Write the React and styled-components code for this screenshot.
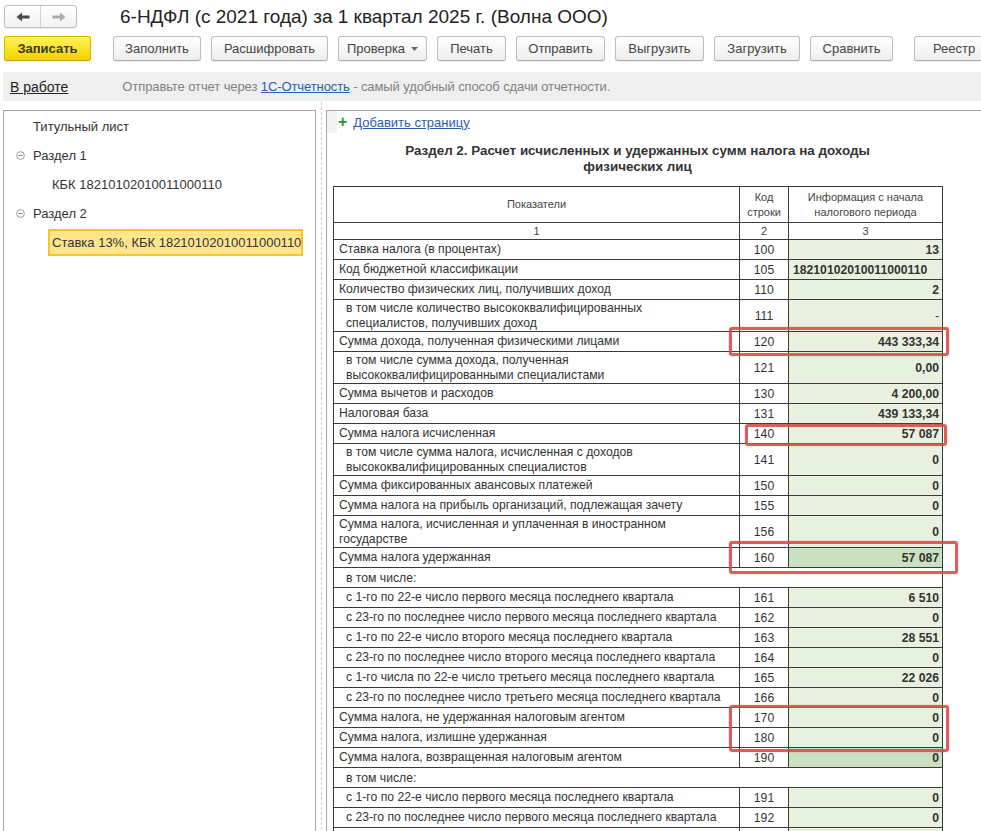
import React from 'react';
import styled, { createGlobalStyle } from 'styled-components';

const GlobalStyle = createGlobalStyle`
  html, body {
    margin: 0;
    padding: 0;
    overflow: hidden;
    background: #fff;
    font-family: 'Liberation Sans', Arial, sans-serif;
    color: #333;
  }
`;

const Page = styled.div`
  width: 981px;
  height: 831px;
  overflow: hidden;
`;

const TopBar = styled.div`
  display: flex;
  align-items: center;
  height: 27px;
  padding: 3px 0 0 4px;
`;

const NavGroup = styled.div`
  display: flex;
  height: 21px;
  border: 1px solid #bdbdbd;
  border-radius: 3px;
  background: linear-gradient(#ffffff, #f1f1f1);
  box-shadow: 0 1px 1px rgba(0, 0, 0, 0.08);
`;

const NavButton = styled.div`
  width: 35px;
  display: flex;
  align-items: center;
  justify-content: center;
  border-left: ${(p) => (p.$divider ? '1px solid #d4d4d4' : 'none')};
`;

const Title = styled.h1`
  margin: 0 0 0 43px;
  font-size: 19px;
  font-weight: normal;
  color: #222;
  white-space: nowrap;
`;

const Toolbar = styled.div`
  display: flex;
  align-items: center;
  gap: 10px;
  margin-top: 6px;
  padding-left: 4px;
  white-space: nowrap;
`;

const Button = styled.div`
  box-sizing: border-box;
  width: ${(p) => p.$w}px;
  flex-shrink: 0;
  height: 25px;
  display: flex;
  align-items: center;
  justify-content: center;
  gap: 6px;
  border: 1px solid #bcbcbc;
  border-bottom-color: #a9a9a9;
  border-radius: 3px;
  background: linear-gradient(#ffffff, #ededed);
  box-shadow: 0 1px 1px rgba(0, 0, 0, 0.07);
  font-size: 13px;
  color: #444;
  margin-left: ${(p) => p.$gapBefore || 0}px;
`;

const PrimaryButton = styled(Button)`
  background: linear-gradient(#fff25a, #f2d200);
  border-color: #d6b600;
  border-bottom-color: #c1a200;
  font-weight: bold;
  color: #3d3a1c;
  margin-right: 12px;
`;

const InfoBar = styled.div`
  display: flex;
  align-items: center;
  height: 29px;
  margin: 11px 0 0 3px;
  padding-left: 7px;
  background: #efefef;
  white-space: nowrap;
`;

const StatusLink = styled.span`
  font-size: 14px;
  color: #222;
  text-decoration: underline;
  margin-right: 54px;
`;

const Hint = styled.span`
  font-size: 13px;
  letter-spacing: -0.1px;
  color: #808080;
`;

const HintLink = styled.span`
  color: #2a5db0;
  text-decoration: underline;
`;

const Main = styled.div`
  display: flex;
  margin-top: 9px;
  padding-left: 3px;
  height: 730px;
`;

const TreePanel = styled.div`
  width: 311px;
  flex-shrink: 0;
  border: 1px solid #a6a6a6;
  border-bottom: none;
  padding-top: 1px;
`;

const Splitter = styled.div`
  width: 10px;
  flex-shrink: 0;
  display: flex;
  justify-content: center;
  margin-top: -8px;

  &::after {
    content: '';
    width: 0;
    border-left: 1px dashed #cfcfcf;
  }
`;

const TreeItem = styled.div`
  display: flex;
  align-items: center;
  height: 29px;
  padding-left: ${(p) => p.$indent}px;
  font-size: 13px;
  color: #333;
  white-space: nowrap;
`;

const Toggle = styled.svg`
  width: 9px;
  height: 9px;
  margin-right: 8px;
`;

const Selected = styled.div`
  display: flex;
  align-items: center;
  width: 249px;
  height: 23px;
  padding-left: 2px;
  margin-left: -4px;
  border: 2px solid #f6c623;
  background: #fde58e;
`;

const FormPanel = styled.div`
  flex: 1;
  border-top: 1px solid #a6a6a6;
  border-left: 1px solid #a6a6a6;
`;

const AddRow = styled.div`
  display: flex;
  align-items: center;
  height: 22px;
  font-size: 13px;
`;

const Gutter = styled.div`
  width: 10px;
  height: 22px;
  background: #f3f3f3;
  margin-right: 1px;
`;

const Plus = styled.span`
  color: #1f9a1f;
  font-weight: bold;
  font-size: 16px;
  line-height: 1;
  margin-right: 6px;
`;

const AddLink = styled.span`
  color: #2a5db0;
  text-decoration: underline;
`;

const Sheet = styled.div`
  width: 609px;
  margin-left: 6px;
`;

const SheetTitle = styled.div`
  margin: 10px 0 11px;
  text-align: center;
  font-weight: bold;
  font-size: 13.4px;
  line-height: 16px;
  color: #333;
`;

const TableWrap = styled.div`
  position: relative;
`;

const Table = styled.table`
  width: 609px;
  border-collapse: collapse;
  table-layout: fixed;
  font-size: 12.2px;
  color: #333;
`;

const Th = styled.td`
  border: 1px solid #3a3a3a;
  padding: 0;
  text-align: center;
  font-size: 11px;
  line-height: 15px;
  color: #444;
  height: ${(p) => p.$h}px;
`;

const Label = styled.td`
  border: 1px solid #3a3a3a;
  padding: 0 0 0 ${(p) => (p.$indent ? 12 : 5)}px;
  line-height: 15px;
  height: ${(p) => (p.$tall ? 31 : 19)}px;
  white-space: nowrap;
  overflow: hidden;
`;

const SubLabel = styled.td`
  border: 1px solid #3a3a3a;
  padding-left: 12px;
  height: 19px;
  padding-top: 0;
  padding-bottom: 0;
`;

const Code = styled.td`
  border: 1px solid #3a3a3a;
  padding: 0;
  text-align: center;
`;

const Value = styled.td`
  border: 1px solid #3a3a3a;
  padding: 0 ${(p) => (p.$left ? 0 : 3)}px 0 ${(p) => (p.$left ? 4 : 0)}px;
  text-align: ${(p) => (p.$left ? 'left' : 'right')};
  background: ${(p) => (p.$dark ? '#c9e0c1' : '#e8f1df')};
  font-weight: ${(p) => (p.$plain ? 'normal' : 'bold')};
  white-space: nowrap;
`;

const Mark = styled.div`
  position: absolute;
  border: 3px solid rgba(215, 72, 66, 0.88);
  border-radius: 3px;
  box-shadow: 0 0 2px rgba(215, 72, 66, 0.35);
  pointer-events: none;
`;

const ArrowLeft = ({ color }) => (
  <svg width="14" height="10" viewBox="0 0 14 10">
    <path d="M0.5 5 L6 0.5 V3.6 H13.5 V6.4 H6 V9.5 Z" fill={color} />
  </svg>
);

const ArrowRight = ({ color }) => (
  <svg width="14" height="10" viewBox="0 0 14 10">
    <path d="M13.5 5 L8 0.5 V3.6 H0.5 V6.4 H8 V9.5 Z" fill={color} />
  </svg>
);

const Caret = () => (
  <svg width="7" height="4" viewBox="0 0 7 4">
    <path d="M0 0 H7 L3.5 4 Z" fill="#666" />
  </svg>
);

const Collapse = () => (
  <Toggle viewBox="0 0 9 9">
    <circle cx="4.5" cy="4.5" r="3.9" fill="#fff" stroke="#9a9a9a" strokeWidth="1" />
    <line x1="2.4" y1="4.5" x2="6.6" y2="4.5" stroke="#7a7a7a" strokeWidth="1" />
  </Toggle>
);

const rows = [
  { label: 'Ставка налога (в процентах)', code: '100', value: '13' },
  { label: 'Код бюджетной классификации', code: '105', value: '18210102010011000110', left: true },
  { label: 'Количество физических лиц, получивших доход', code: '110', value: '2' },
  {
    label: ['в том числе количество высококвалифицированных', 'специалистов, получивших доход'],
    code: '111',
    value: '-',
    indent: true,
    plain: true,
  },
  { label: 'Сумма дохода, полученная физическими лицами', code: '120', value: '443 333,34' },
  {
    label: ['в том числе сумма дохода, полученная', 'высококвалифицированными специалистами'],
    code: '121',
    value: '0,00',
    indent: true,
  },
  { label: 'Сумма вычетов и расходов', code: '130', value: '4 200,00' },
  { label: 'Налоговая база', code: '131', value: '439 133,34' },
  { label: 'Сумма налога исчисленная', code: '140', value: '57 087' },
  {
    label: ['в том числе сумма налога, исчисленная с доходов', 'высококвалифицированных специалистов'],
    code: '141',
    value: '0',
    indent: true,
  },
  { label: 'Сумма фиксированных авансовых платежей', code: '150', value: '0' },
  { label: 'Сумма налога на прибыль организаций, подлежащая зачету', code: '155', value: '0' },
  { label: ['Сумма налога, исчисленная и уплаченная в иностранном', 'государстве'], code: '156', value: '0' },
  { label: 'Сумма налога удержанная', code: '160', value: '57 087', dark: true },
  { sub: 'в том числе:' },
  { label: 'с 1-го по 22-е число первого месяца последнего квартала', code: '161', value: '6 510', indent: true },
  { label: 'с 23-го по последнее число первого месяца последнего квартала', code: '162', value: '0', indent: true },
  { label: 'с 1-го по 22-е число второго месяца последнего квартала', code: '163', value: '28 551', indent: true },
  { label: 'с 23-го по последнее число второго месяца последнего квартала', code: '164', value: '0', indent: true },
  { label: 'с 1-го числа по 22-е число третьего месяца последнего квартала', code: '165', value: '22 026', indent: true },
  { label: 'с 23-го по последнее число третьего месяца последнего квартала', code: '166', value: '0', indent: true },
  { label: 'Сумма налога, не удержанная налоговым агентом', code: '170', value: '0' },
  { label: 'Сумма налога, излишне удержанная', code: '180', value: '0' },
  { label: 'Сумма налога, возвращенная налоговым агентом', code: '190', value: '0', dark: true },
  { sub: 'в том числе:' },
  { label: 'с 1-го по 22-е число первого месяца последнего квартала', code: '191', value: '0', indent: true },
  { label: 'с 23-го по последнее число первого месяца последнего квартала', code: '192', value: '0', indent: true },
  { label: 'с 1-го по 22-е число второго месяца последнего квартала', code: '193', value: '0', indent: true },
];

// red annotation frames, relative to the table's top-left corner
const marks = [
  { left: 396, top: 141, width: 220, height: 29 },
  { left: 412, top: 238, width: 202, height: 22 },
  { left: 396, top: 355, width: 229, height: 33 },
  { left: 396, top: 519, width: 220, height: 47 },
];

const toolbarButtons = [
  { text: 'Заполнить', w: 88 },
  { text: 'Расшифровать', w: 117 },
  { text: 'Проверка', w: 89, menu: true },
  { text: 'Печать', w: 69 },
  { text: 'Отправить', w: 89 },
  { text: 'Выгрузить', w: 89 },
  { text: 'Загрузить', w: 86 },
  { text: 'Сравнить', w: 83 },
];

export default function App() {
  return (
    <Page>
      <GlobalStyle />
      <TopBar>
        <NavGroup>
          <NavButton>
            <ArrowLeft color="#4a4a4a" />
          </NavButton>
          <NavButton $divider>
            <ArrowRight color="#a9a9a9" />
          </NavButton>
        </NavGroup>
        <Title>6-НДФЛ (с 2021 года) за 1 квартал 2025 г. (Волна ООО)</Title>
      </TopBar>

      <Toolbar>
        <PrimaryButton $w={87}>Записать</PrimaryButton>
        {toolbarButtons.map((b) => (
          <Button key={b.text} $w={b.w}>
            {b.text}
            {b.menu && <Caret />}
          </Button>
        ))}
        <Button $w={80} $gapBefore={11}>
          Реестр
        </Button>
      </Toolbar>

      <InfoBar>
        <StatusLink>В работе</StatusLink>
        <Hint>
          Отправьте отчет через <HintLink>1С-Отчетность</HintLink> - самый удобный способ сдачи отчетности.
        </Hint>
      </InfoBar>

      <Main>
        <TreePanel>
          <TreeItem $indent={29}>Титульный лист</TreeItem>
          <TreeItem $indent={12}>
            <Collapse />
            Раздел 1
          </TreeItem>
          <TreeItem $indent={48}>КБК 18210102010011000110</TreeItem>
          <TreeItem $indent={12}>
            <Collapse />
            Раздел 2
          </TreeItem>
          <TreeItem $indent={48}>
            <Selected>Ставка 13%, КБК 18210102010011000110</Selected>
          </TreeItem>
        </TreePanel>

        <Splitter />

        <FormPanel>
          <AddRow>
            <Gutter />
            <Plus>+</Plus>
            <AddLink>Добавить страницу</AddLink>
          </AddRow>
          <Sheet>
            <SheetTitle>
              Раздел 2. Расчет исчисленных и удержанных сумм налога на доходы
              <br />
              физических лиц
            </SheetTitle>
            <TableWrap>
              <Table>
                <colgroup>
                  <col style={{ width: 406 }} />
                  <col style={{ width: 49 }} />
                  <col style={{ width: 154 }} />
                </colgroup>
                <tbody>
                  <tr>
                    <Th $h={35}>Показатели</Th>
                    <Th $h={35}>
                      Код
                      <br />
                      строки
                    </Th>
                    <Th $h={35}>
                      Информация с начала
                      <br />
                      налогового периода
                    </Th>
                  </tr>
                  <tr>
                    <Th $h={16}>1</Th>
                    <Th $h={16}>2</Th>
                    <Th $h={16}>3</Th>
                  </tr>
                  {rows.map((r, i) =>
                    r.sub ? (
                      <tr key={i}>
                        <SubLabel colSpan={3}>{r.sub}</SubLabel>
                      </tr>
                    ) : (
                      <tr key={i}>
                        <Label $indent={r.indent} $tall={Array.isArray(r.label)}>
                          {Array.isArray(r.label) ? (
                            <>
                              {r.label[0]}
                              <br />
                              {r.label[1]}
                            </>
                          ) : (
                            r.label
                          )}
                        </Label>
                        <Code>{r.code}</Code>
                        <Value $left={r.left} $dark={r.dark} $plain={r.plain}>
                          {r.value}
                        </Value>
                      </tr>
                    )
                  )}
                </tbody>
              </Table>
              {marks.map((m, i) => (
                <Mark key={i} style={{ left: m.left, top: m.top, width: m.width - 6, height: m.height - 6 }} />
              ))}
            </TableWrap>
          </Sheet>
        </FormPanel>
      </Main>
    </Page>
  );
}
